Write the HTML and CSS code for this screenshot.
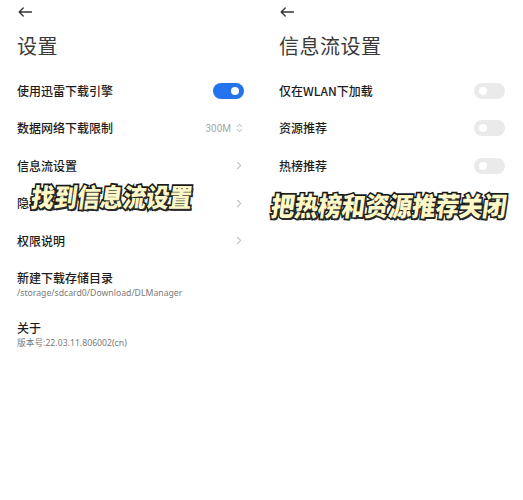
FILE: index.html
```html
<!DOCTYPE html>
<html lang="zh">
<head>
<meta charset="utf-8">
<link rel="stylesheet" href="styles.css">
</head>
<body>
<div class="screen">
  <section class="panel">
    <div class="back">
      <svg width="14" height="10" viewBox="0 0 14 10"><path d="M13.5 5H1.2M5.2 1L1.2 5l4 4" fill="none" stroke="#333" stroke-width="1.3" stroke-linecap="round" stroke-linejoin="round"/></svg>
    </div>
    <h1 class="title">设置</h1>
    <div class="row">
      <span class="label">使用迅雷下载引擎</span>
      <span class="toggle on"><span class="knob"></span></span>
    </div>
    <div class="row">
      <span class="label">数据网络下载限制</span>
      <span class="value">300M
        <svg width="7" height="10" viewBox="0 0 7 10"><path d="M1 3.8L3.5 1.3 6 3.8M1 6.2l2.5 2.5L6 6.2" fill="none" stroke="#aaa" stroke-width="0.9"/></svg>
      </span>
    </div>
    <div class="row">
      <span class="label">信息流设置</span>
      <span class="chev"><svg width="6" height="9" viewBox="0 0 6 9"><path d="M1.2 1l3.5 3.5L1.2 8" fill="none" stroke="#c4c4c4" stroke-width="1.1"/></svg></span>
    </div>
    <div class="row">
      <span class="label">隐私设置</span>
      <span class="chev"><svg width="6" height="9" viewBox="0 0 6 9"><path d="M1.2 1l3.5 3.5L1.2 8" fill="none" stroke="#c4c4c4" stroke-width="1.1"/></svg></span>
    </div>
    <div class="row">
      <span class="label">权限说明</span>
      <span class="chev"><svg width="6" height="9" viewBox="0 0 6 9"><path d="M1.2 1l3.5 3.5L1.2 8" fill="none" stroke="#c4c4c4" stroke-width="1.1"/></svg></span>
    </div>
    <div class="block">
      <div class="label">新建下载存储目录</div>
      <div class="sub">/storage/sdcard0/Download/DLManager</div>
    </div>
    <div class="block">
      <div class="label">关于</div>
      <div class="sub">版本号:22.03.11.806002(cn)</div>
    </div>
    <div class="caption cap-left">找到信息流设置</div>
  </section>
  <section class="panel">
    <div class="back">
      <svg width="14" height="10" viewBox="0 0 14 10"><path d="M13.5 5H1.2M5.2 1L1.2 5l4 4" fill="none" stroke="#333" stroke-width="1.3" stroke-linecap="round" stroke-linejoin="round"/></svg>
    </div>
    <h1 class="title">信息流设置</h1>
    <div class="row">
      <span class="label">仅在WLAN下加载</span>
      <span class="toggle"><span class="knob"></span></span>
    </div>
    <div class="row">
      <span class="label">资源推荐</span>
      <span class="toggle"><span class="knob"></span></span>
    </div>
    <div class="row">
      <span class="label">热榜推荐</span>
      <span class="toggle"><span class="knob"></span></span>
    </div>
    <div class="caption cap-right">把热榜和资源推荐关闭</div>
  </section>
</div>
</body>
</html>
```
FILE: styles.css
```css
html, body {
  margin: 0;
  padding: 0;
  background: #fff;
}
body {
  font-family: "Noto Sans CJK SC", "Noto Sans", sans-serif;
  color: #1c1c1c;
}
.screen {
  display: grid;
  grid-template-columns: 262px 261px;
  width: 523px;
  height: 500px;
}
.panel {
  position: relative;
  padding: 0 18px 0 17px;
}
.back {
  height: 24px;
  display: flex;
  align-items: center;
  padding-left: 1px;
}
.title {
  margin: 12px 0 16px;
  font-size: 20px;
  line-height: 20px;
  font-weight: 400;
  color: #3a3a3a;
  letter-spacing: 0.5px;
}
.row {
  height: 37.5px;
  display: flex;
  align-items: center;
  justify-content: space-between;
}
.label {
  font-size: 12px;
  line-height: 16px;
  font-weight: 500;
  color: #1c1c1c;
}
.value {
  font-family: "Roboto", "Noto Sans", sans-serif;
  font-size: 10px;
  color: #a8a8a8;
  display: flex;
  align-items: center;
  gap: 5px;
  padding-right: 1px;
}
.chev {
  display: flex;
  padding-right: 2px;
}
.toggle {
  width: 31px;
  height: 16px;
  border-radius: 8px;
  background: #eaeaea;
  position: relative;
  display: block;
}
.toggle .knob {
  position: absolute;
  top: 4px;
  left: 5px;
  width: 8px;
  height: 8px;
  border-radius: 50%;
  background: #fff;
}
.toggle.on {
  background: #2273ec;
}
.toggle.on .knob {
  left: auto;
  right: 5px;
}
.block {
  padding: 10px 0;
}
.block .label {
  line-height: 16px;
}
.sub {
  font-size: 8.7px;
  line-height: 14px;
  color: #7a7a7a;
  font-family: "Noto Sans", "Noto Sans CJK SC", sans-serif;
}
.caption {
  position: absolute;
  font-family: "Noto Sans CJK SC", sans-serif;
  font-weight: 900;
  color: #fdf8c8;
  -webkit-text-stroke: 3px #1a1a1a;
  paint-order: stroke fill;
  text-shadow: 2px 2px 0 #2a2a2a;
  white-space: nowrap;
  transform-origin: left top;
  transform: skewX(-8deg) scaleY(1.12);
}
.cap-left {
  left: 34px;
  top: 179px;
  font-size: 23px;
  line-height: 30px;
}
.cap-right {
  left: 12px;
  top: 187px;
  font-size: 23.5px;
  line-height: 32px;
}
```
